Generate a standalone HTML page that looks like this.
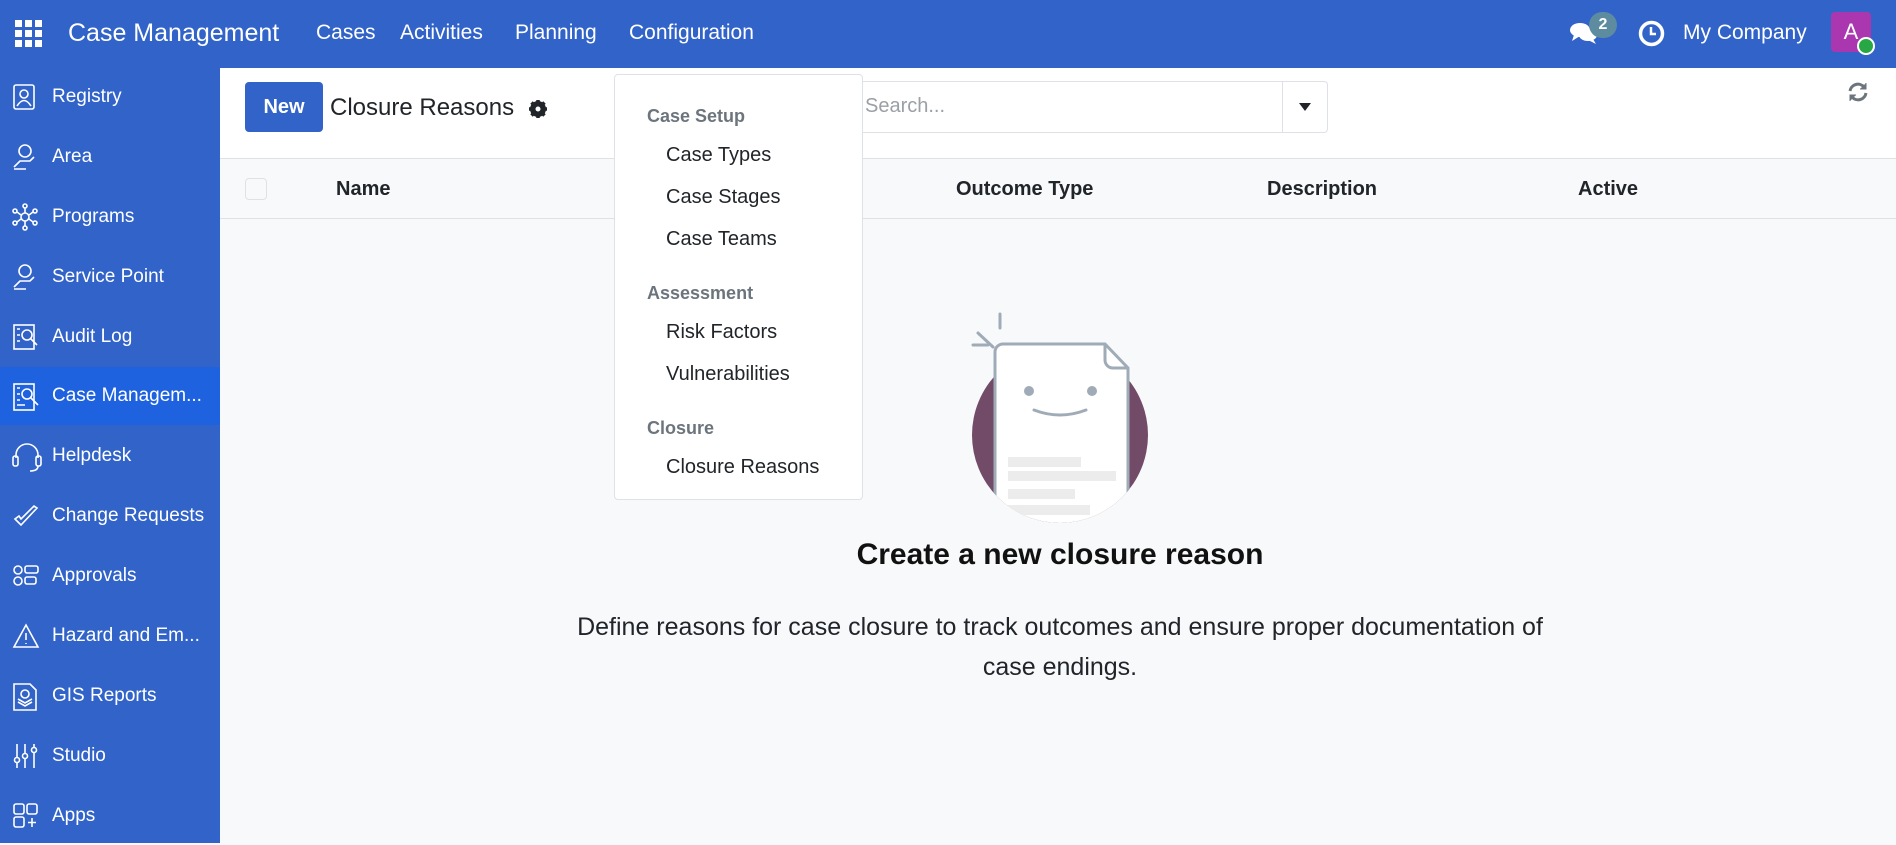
<!DOCTYPE html>
<html><head><meta charset="utf-8"><style>
*{box-sizing:border-box;margin:0;padding:0}
body{width:1896px;height:843px;overflow:hidden;font-family:"Liberation Sans","DejaVu Sans",sans-serif;background:#f8f9fa;position:relative;color:#212529}
.nav{position:absolute;left:0;top:0;width:1896px;height:68px;background:#3163c8;color:#fff}
.nav span{position:absolute;top:21px;font-size:21px}
.side{position:absolute;left:0;top:68px;width:220px;height:775px;background:#3163c8;color:#fff}
.item{position:absolute;left:0;width:220px;height:58px;font-size:19px;line-height:58px;padding-left:52px;white-space:nowrap}
.item svg{position:absolute;left:12px;top:15px}
.item.act{background:#1f62e0}
.cp{position:absolute;left:220px;top:68px;width:1676px;height:91px;background:#fff;border-bottom:1px solid #dee2e6}
.hdr{position:absolute;left:220px;top:159px;width:1676px;height:60px;background:#f8f9fa;border-bottom:1px solid #dee2e6;font-weight:bold;font-size:20px}
.hdr span{position:absolute;top:19px}
.dd{position:absolute;left:614px;top:74px;width:249px;height:426px;background:#fff;border:1px solid #dee2e6;border-radius:4px}
.dd .h{position:absolute;left:32px;font-size:18px;color:#6c757d;font-weight:bold}
.dd .i{position:absolute;left:51px;font-size:20px;color:#212529}
</style></head><body>
<div class="nav">
<svg style="position:absolute;left:15px;top:20px" width="27" height="27" viewBox="0 0 27 27" fill="#fff"><rect x="0" y="0" width="7" height="7"/><rect x="10" y="0" width="7" height="7"/><rect x="20" y="0" width="7" height="7"/><rect x="0" y="10" width="7" height="7"/><rect x="10" y="10" width="7" height="7"/><rect x="20" y="10" width="7" height="7"/><rect x="0" y="20" width="7" height="7"/><rect x="10" y="20" width="7" height="7"/><rect x="20" y="20" width="7" height="7"/></svg>
<span style="left:68px;top:19px;font-size:25px">Case Management</span>
<span style="left:316px">Cases</span>
<span style="left:400px">Activities</span>
<span style="left:515px">Planning</span>
<span style="left:629px">Configuration</span>
<svg style="position:absolute;left:1569px;top:20px" width="30" height="26" viewBox="0 0 30 26" fill="#fff"><ellipse cx="11" cy="10" rx="10" ry="7"/><path d="M5 15 L3 21 L11 16Z"/><ellipse cx="19" cy="15" rx="9" ry="6"/><path d="M24 19 L27 24 L19 20Z"/></svg>
<div style="position:absolute;left:1589px;top:12px;width:28px;height:26px;border-radius:13px;background:#5d8ba0;color:#fff;font-size:16px;font-weight:bold;text-align:center;line-height:26px">2</div>
<svg style="position:absolute;left:1638px;top:20px" width="27" height="27" viewBox="0 0 27 27"><circle cx="13.5" cy="13.5" r="11" fill="none" stroke="#fff" stroke-width="3.5"/><path d="M13 7 V14 H18" stroke="#fff" stroke-width="2.5" fill="none"/></svg>
<span style="left:1683px;top:21px">My Company</span>
<div style="position:absolute;left:1831px;top:12px;width:40px;height:40px;border-radius:4px;background:#ab37b0;color:#fff;font-size:22px;text-align:center;line-height:40px">A</div>
<div style="position:absolute;left:1857px;top:37px;width:18px;height:18px;border-radius:50%;background:#28a745;border:2px solid #fff"></div>
</div>
<div class="side">
<div class="item" style="top:0">Registry<svg width="26" height="28" viewBox="0 0 26 28" fill="none" stroke="#fff" stroke-width="1.6"><rect x="2" y="2" width="20" height="24" rx="2"/><circle cx="12" cy="11" r="4"/><path d="M5 23 Q12 12 19 23"/></svg></div>
<div class="item" style="top:60px">Area<svg width="26" height="28" viewBox="0 0 26 28" fill="none" stroke="#fff" stroke-width="1.6"><circle cx="13" cy="8" r="6"/><path d="M2 24 L8 18 H18 L22 14 M2 26 H14"/></svg></div>
<div class="item" style="top:120px">Programs<svg width="26" height="28" viewBox="0 0 26 28" fill="none" stroke="#fff" stroke-width="1.6"><circle cx="13" cy="14" r="4"/><circle cx="13" cy="3" r="2"/><circle cx="13" cy="25" r="2"/><circle cx="3" cy="8" r="2"/><circle cx="23" cy="8" r="2"/><circle cx="3" cy="20" r="2"/><circle cx="23" cy="20" r="2"/><path d="M13 5V10M13 18V23M5 9L9 12M21 9L17 12M5 19L9 16M21 19L17 16"/></svg></div>
<div class="item" style="top:180px">Service Point<svg width="26" height="28" viewBox="0 0 26 28" fill="none" stroke="#fff" stroke-width="1.6"><circle cx="13" cy="8" r="6"/><path d="M2 24 L8 18 H18 L22 14 M2 26 H14"/></svg></div>
<div class="item" style="top:240px">Audit Log<svg width="28" height="28" viewBox="0 0 28 28" fill="none" stroke="#fff" stroke-width="1.6"><rect x="2" y="2" width="20" height="24"/><circle cx="15" cy="12" r="5"/><path d="M19 16L25 22M5 6h3M5 12h3M5 18h3"/></svg></div>
<div class="item act" style="top:299px">Case Managem...<svg width="28" height="30" viewBox="0 0 28 30" fill="none" stroke="#fff" stroke-width="1.6"><rect x="2" y="2" width="20" height="26"/><circle cx="15" cy="12" r="5"/><path d="M19 16L26 23M5 6h3M5 12h3M5 18h3M5 23h8"/></svg></div>
<div class="item" style="top:359px">Helpdesk<svg width="30" height="32" viewBox="0 0 30 32" fill="none" stroke="#fff" stroke-width="1.6"><path d="M4 16 V13 A11 11 0 0 1 26 13 V16"/><rect x="1" y="14" width="5" height="10" rx="2"/><rect x="24" y="14" width="5" height="10" rx="2"/><path d="M26 24 Q26 29 18 29"/></svg></div>
<div class="item" style="top:419px">Change Requests<svg width="28" height="28" viewBox="0 0 28 28" fill="none" stroke="#fff" stroke-width="1.6"><path d="M3 17 L9 23 L25 6 L22 4 L9 17 L7 14Z"/></svg></div>
<div class="item" style="top:479px">Approvals<svg width="28" height="28" viewBox="0 0 28 28" fill="none" stroke="#fff" stroke-width="1.6"><circle cx="6" cy="8" r="4"/><circle cx="6" cy="19" r="4"/><rect x="13" y="4" width="13" height="7" rx="2"/><rect x="13" y="15" width="11" height="7" rx="2"/></svg></div>
<div class="item" style="top:539px">Hazard and Em...<svg width="28" height="28" viewBox="0 0 28 28" fill="none" stroke="#fff" stroke-width="1.6"><path d="M14 3 L26 25 H2Z M14 11V18 M14 21V22"/></svg></div>
<div class="item" style="top:599px">GIS Reports<svg width="28" height="30" viewBox="0 0 28 30" fill="none" stroke="#fff" stroke-width="1.6"><path d="M2 2H18L24 8V28H2Z"/><circle cx="13" cy="12" r="4"/><path d="M6 20L13 24L20 20M6 17L13 21L20 17"/></svg></div>
<div class="item" style="top:659px">Studio<svg width="28" height="28" viewBox="0 0 28 28" fill="none" stroke="#fff" stroke-width="1.6"><path d="M5 2V26M13 2V26M22 2V26"/><circle cx="5" cy="18" r="2.5" fill="#3163c8"/><circle cx="13" cy="14" r="2.5" fill="#3163c8"/><circle cx="22" cy="8" r="2.5" fill="#3163c8"/></svg></div>
<div class="item" style="top:719px">Apps<svg width="28" height="28" viewBox="0 0 28 28" fill="none" stroke="#fff" stroke-width="1.6"><rect x="2" y="2" width="10" height="10" rx="2"/><rect x="15" y="2" width="10" height="10" rx="2"/><rect x="2" y="15" width="10" height="10" rx="2"/><path d="M20 16V25M16 20.5H24"/></svg></div>
</div>
<div class="cp">
<div style="position:absolute;left:25px;top:14px;width:78px;height:50px;border-radius:4px;background:#3163c8;color:#fff;font-weight:bold;font-size:20px;text-align:center;line-height:50px">New</div>
<div style="position:absolute;left:110px;top:26px;font-size:24px">Closure Reasons</div>
<svg style="position:absolute;left:308px;top:31px" width="20" height="20" viewBox="0 0 20 20"><circle cx="10" cy="10" r="6" fill="none" stroke="#212529" stroke-width="4"/><g stroke="#212529" stroke-width="3.5"><path d="M10 1V19M1 10H19M3.5 3.5L16.5 16.5M16.5 3.5L3.5 16.5"/></g><circle cx="10" cy="10" r="2.5" fill="#fff"/></svg>
<div style="position:absolute;left:620px;top:13px;width:488px;height:52px;border:1px solid #dee2e6;border-radius:4px;background:#fff"></div>
<div style="position:absolute;left:1062px;top:13px;width:1px;height:52px;background:#dee2e6"></div>
<div style="position:absolute;left:645px;top:27px;font-size:20px;color:#9aa0a6">Search...</div>
<svg style="position:absolute;left:1079px;top:35px" width="12" height="8"><path d="M0 0H12L6 8Z" fill="#212529"/></svg>
<svg style="position:absolute;left:1627px;top:13px" width="22" height="22" viewBox="0 0 22 22" fill="none" stroke="#6c757d" stroke-width="3"><path d="M3 10 A8 8 0 0 1 17 6"/><path d="M19 12 A8 8 0 0 1 5 16"/><path d="M19 2V8H13" fill="#6c757d" stroke-width="1"/><path d="M3 20V14H9" fill="#6c757d" stroke-width="1"/></svg>
</div>
<div class="hdr">
<div style="position:absolute;left:25px;top:19px;width:22px;height:22px;border:1px solid #dee2e6;border-radius:4px;background:#f8f9fa"></div>
<span style="left:116px">Name</span>
<span style="left:736px">Outcome Type</span>
<span style="left:1047px">Description</span>
<span style="left:1358px">Active</span>
</div>
<svg style="position:absolute;left:960px;top:310px" width="200" height="220" viewBox="960 310 200 220">
<defs><clipPath id="c"><circle cx="1060" cy="435" r="88"/></clipPath></defs>
<circle cx="1060" cy="435" r="88" fill="#714b67"/>
<g clip-path="url(#c)"><path d="M995 530 V352 a8 8 0 0 1 8 -8 H1105 L1128 368 V530Z" fill="#fff" stroke="#a0abb8" stroke-width="3"/>
<rect x="1008" y="457" width="73" height="10" fill="#ececec"/><rect x="1008" y="471" width="108" height="10" fill="#ececec"/><rect x="1008" y="489" width="67" height="10" fill="#ececec"/><rect x="1008" y="505" width="82" height="10" fill="#ececec"/></g>
<path d="M995 440 V352 a8 8 0 0 1 8 -8 H1105 L1128 368 V440" fill="#fff" stroke="#a0abb8" stroke-width="3"/>
<path d="M1105 344 V360 a8 8 0 0 0 8 8 H1128" fill="none" stroke="#a0abb8" stroke-width="3"/>
<path d="M978 333 L993 347 M1000 314 V328 M973 345 H988" stroke="#a0abb8" stroke-width="3" stroke-linecap="round"/>
<circle cx="1029" cy="391" r="5" fill="#a0abb8"/><circle cx="1092" cy="391" r="5" fill="#a0abb8"/>
<path d="M1034 410 Q1060 420 1086 410" fill="none" stroke="#a0abb8" stroke-width="3" stroke-linecap="round"/>
</svg>
<div style="position:absolute;left:460px;top:538px;width:1200px;text-align:center;font-size:30px;font-weight:bold;color:#111">Create a new closure reason</div>
<div style="position:absolute;left:460px;top:607px;width:1200px;text-align:center;font-size:25px;line-height:40px;color:#212529">Define reasons for case closure to track outcomes and ensure proper documentation of<br>case endings.</div>
<div class="dd">
<div class="h" style="top:31px">Case Setup</div>
<div class="i" style="top:69px">Case Types</div>
<div class="i" style="top:111px">Case Stages</div>
<div class="i" style="top:153px">Case Teams</div>
<div class="h" style="top:208px">Assessment</div>
<div class="i" style="top:246px">Risk Factors</div>
<div class="i" style="top:288px">Vulnerabilities</div>
<div class="h" style="top:343px">Closure</div>
<div class="i" style="top:381px">Closure Reasons</div>
</div>
</body></html>
